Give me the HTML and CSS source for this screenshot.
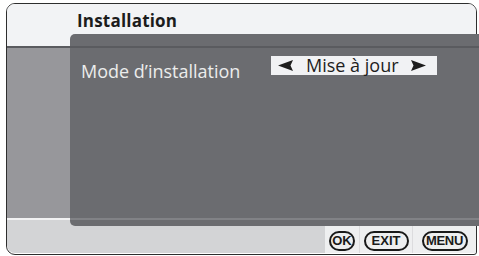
FILE: index.html
```html
<!DOCTYPE html>
<html lang="fr">
<head>
<meta charset="utf-8">
<title>Installation</title>
<link rel="stylesheet" href="styles.css">
</head>
<body>
<div class="frame">
  <div class="header"></div>
  <h1 class="title">Installation</h1>
  <div class="strip"></div>
  <div class="footer"></div>
  <div class="panel">
    <div class="row">
      <span class="label">Mode d’installation</span>
      <span class="value">
        <svg class="arrow" width="15" height="11" viewBox="0 0 15 11"><path d="M0 5.5 L15 0 L12.5 5.5 L15 11 Z" fill="#1e1e1e"/></svg>
        <span class="value-text">Mise à jour</span>
        <svg class="arrow" width="15" height="11" viewBox="0 0 15 11"><path d="M15 5.5 L0 0 L2.5 5.5 L0 11 Z" fill="#1e1e1e"/></svg>
      </span>
    </div>
  </div>
  <div class="line-top"></div>
  <div class="line-bottom-strip"></div>
  <div class="line-bottom-panel"></div>
  <div class="keys">
    <div class="key-cell cell-ok"><span class="key key-ok">OK</span></div>
    <div class="key-cell cell-exit"><span class="key key-exit">EXIT</span></div>
    <div class="key-cell cell-menu"><span class="key key-menu">MENU</span></div>
  </div>
</div>
</body>
</html>
```
FILE: styles.css
```css
html, body {
  margin: 0;
  padding: 0;
  background: #ffffff;
}
body {
  width: 479px;
  height: 256px;
  overflow: hidden;
  font-family: "Open Sans", "Noto Sans", sans-serif;
}
.frame {
  margin: 3px 0 0 6px;
  width: 469px;
  height: 250px;
  border: 1px solid #2e2e2e;
  border-radius: 9px 9px 3px 9px;
  display: grid;
  grid-template-columns: 63px 1fr;
  grid-template-rows: 30px 12px 2px 170px 2px 6px 27px;
}
.header {
  grid-column: 1 / 3;
  grid-row: 1 / 3;
  background: #f2f3f5;
  border-radius: 8px 8px 0 0;
}
.title {
  grid-column: 1 / 3;
  grid-row: 1 / 2;
  margin: 0;
  padding: 7px 0 0 70px;
  font-size: 17px;
  font-weight: 700;
  line-height: 20px;
  color: #1c1c1c;
  letter-spacing: 0.2px;
}
.strip {
  grid-column: 1 / 2;
  grid-row: 3 / 5;
  background: #97979b;
}
.footer {
  grid-column: 1 / 3;
  grid-row: 5 / 8;
  background: #d3d4d6;
  border-radius: 0 0 2px 8px;
}
.panel {
  grid-column: 2 / 3;
  grid-row: 2 / 7;
  margin-right: -3px;
  background: #6b6c70;
  border-radius: 5px 0 0 5px;
  padding: 22px 0 0 11px;
  z-index: 1;
}
.line-top {
  grid-column: 1 / 3;
  grid-row: 3 / 4;
  margin-right: -3px;
  background: #5a5b5f;
  z-index: 2;
}
.line-bottom-strip {
  grid-column: 1 / 2;
  grid-row: 5 / 6;
  background: #f2f2f3;
  z-index: 2;
}
.line-bottom-panel {
  grid-column: 2 / 3;
  grid-row: 5 / 6;
  margin-right: -3px;
  background: #818286;
  z-index: 2;
}
.row {
  display: flex;
  align-items: flex-start;
}
.label {
  margin-top: 3px;
  width: 190px;
  font-size: 18px;
  line-height: 25px;
  color: #ececec;
}
.value {
  display: flex;
  align-items: center;
  height: 19px;
  width: 166px;
  padding: 0 0 0 7px;
  box-sizing: border-box;
  background: #f1f2f4;
  color: #1e1e1e;
}
.value-text {
  margin: 0 12px 0 13px;
  font-size: 18px;
  line-height: 19px;
}
.arrow {
  display: block;
  flex: none;
}
.keys {
  grid-column: 2 / 3;
  grid-row: 7 / 8;
  justify-self: end;
  display: flex;
  width: 151px;
  background: #eeeff0;
  border-radius: 0 0 2px 0;
  z-index: 1;
}
.key-cell {
  display: flex;
  align-items: center;
  justify-content: center;
  height: 27px;
  box-sizing: border-box;
}
.cell-ok { width: 34px; }
.cell-exit { width: 54px; border-left: 1px solid #dcdcde; border-right: 1px solid #dcdcde; }
.cell-menu { width: 63px; }
.key {
  display: flex;
  align-items: center;
  justify-content: center;
  height: 20px;
  box-sizing: border-box;
  border: 2px solid #1a1a1a;
  border-radius: 10px;
  font-family: "Liberation Sans", Arial, sans-serif;
  font-weight: 700;
  font-size: 13px;
  color: #1a1a1a;
}
.key-ok { width: 26px; margin-top: 2px; }
.key-exit { width: 45px; margin-top: 2px; }
.key-menu { width: 46px; margin-top: 2px; letter-spacing: -0.3px; }
```
